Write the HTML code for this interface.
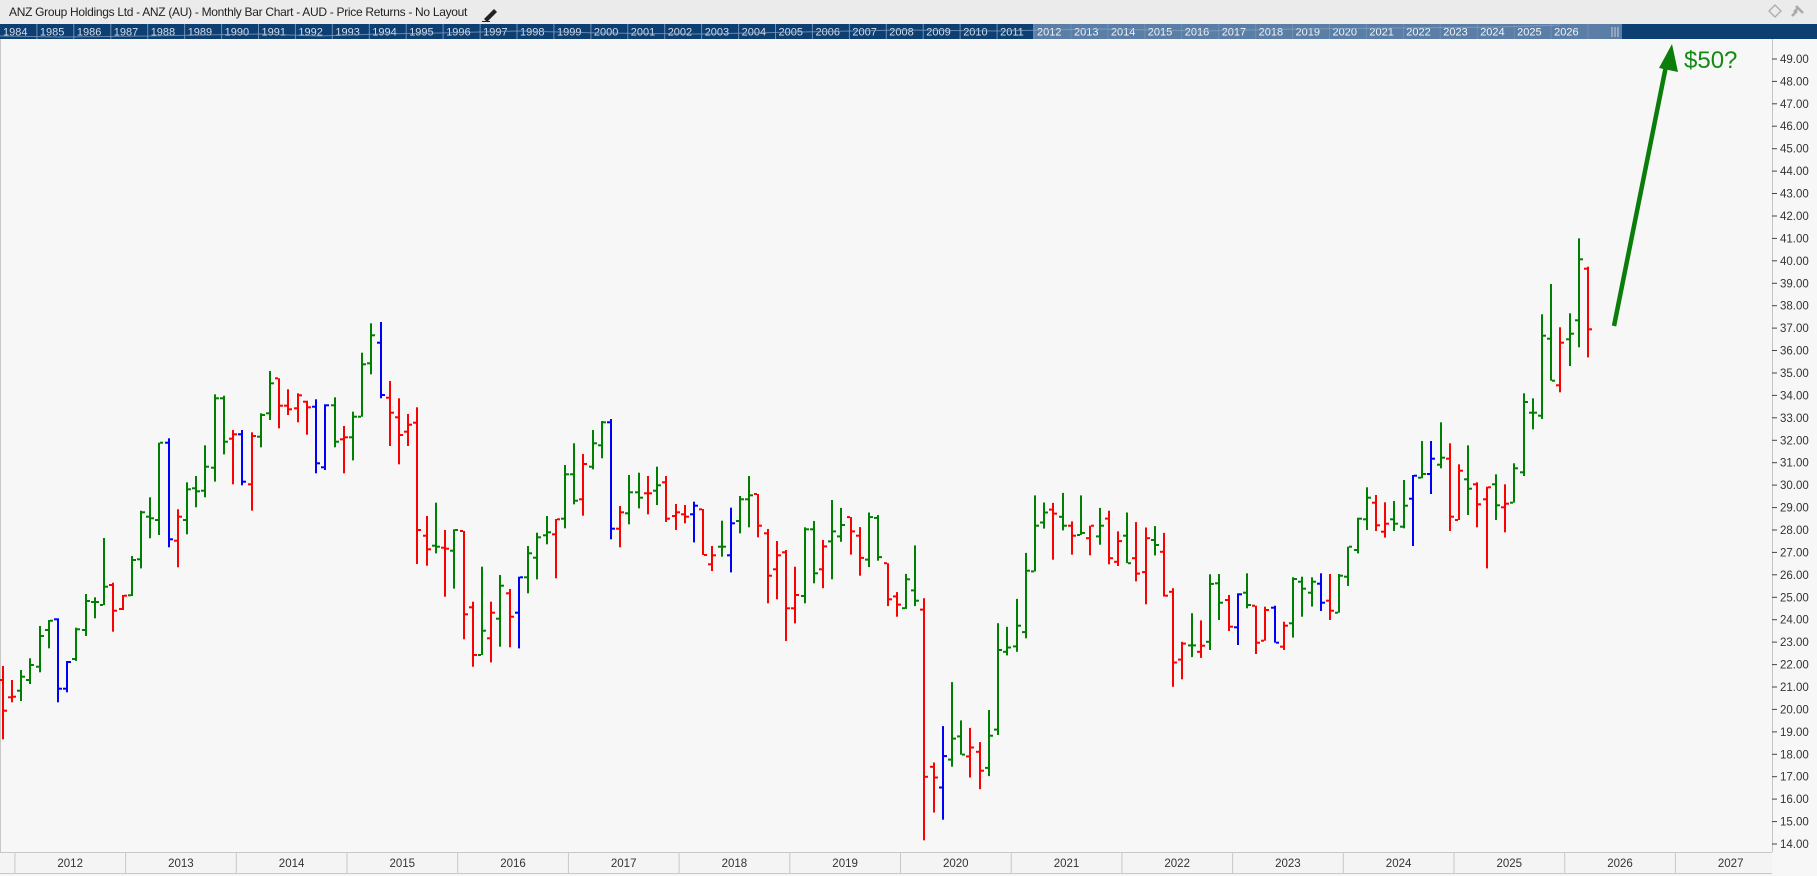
<!DOCTYPE html>
<html><head><meta charset="utf-8">
<style>
html,body{margin:0;padding:0;width:1817px;height:876px;overflow:hidden;background:#f7f7f7;font-family:"Liberation Sans",sans-serif}
#t{position:absolute;left:0;top:0;width:1817px;height:24px;background:#ebebeb;font-size:12px;color:#222;line-height:24px}
#t span{position:absolute;left:9px;top:0;letter-spacing:-0.3px}
svg{position:absolute;left:0;top:0}
</style></head><body>
<div id="t"><span>ANZ Group Holdings Ltd - ANZ (AU) - Monthly Bar Chart - AUD - Price Returns - No Layout</span></div>
<svg id="s" width="1817" height="876" xmlns="http://www.w3.org/2000/svg"></svg>
<script>
var S=document.getElementById('s'),h='';
h+='<path d="M484 19 L494 9 L497 12 L487 22 Z" fill="#222"/><line x1="482" y1="21.5" x2="490" y2="21.5" stroke="#222" stroke-width="1"/>';
h+='<path d="M1775 5 L1781 11 L1775 17 L1769 11 Z" fill="none" stroke="#aaa" stroke-width="1.3"/>';
h+='<path d="M1792 16 L1797 11 M1796 6 L1803 13 M1798 8 L1794 12" stroke="#aaa" stroke-width="2.5" fill="none"/>';
h+='<rect x="0" y="24" width="1817" height="15" fill="#0d3f73"/>';
h+='<rect x="1033" y="24" width="589" height="15" fill="#5a7ea6"/>';
for(var k=0;k<43;k++){var x=k*36.93;var yr=1984+k;
 h+='<line x1="'+(x+36.9).toFixed(1)+'" y1="24" x2="'+(x+36.9).toFixed(1)+'" y2="39" stroke="#6f8fb5" stroke-width="1"/>';
 h+='<text x="'+(x+3).toFixed(1)+'" y="35.5" font-size="11" fill="'+(yr>=2012?'#f2f5f9':'#d5dde8')+'">'+yr+'</text>';}
h+='<polyline points="0,36 60,37 150,36 200,35 260,34 320,36 380,34 440,33 520,31 600,33 700,34 800,32 900,30 1000,31 1100,29 1200,31 1300,29 1400,28 1500,27 1560,25" fill="none" stroke="#8aa6c6" stroke-width="1" opacity="0.7"/>';
h+='<line x1="1612" y1="27" x2="1612" y2="37" stroke="#ccd" /><line x1="1615" y1="27" x2="1615" y2="37" stroke="#ccd"/><line x1="1618" y1="27" x2="1618" y2="37" stroke="#ccd"/>';
h+='<line x1="0.5" y1="39" x2="0.5" y2="852" stroke="#c8c8c8"/>';
h+='<line x1="1772.5" y1="39" x2="1772.5" y2="852" stroke="#c4c4c4"/>';
function py(p){return 844-(p-14)*22.43;}
for(var p=14;p<=50;p++){var y=py(p);if(y<38)continue;
 h+='<line x1="1772" y1="'+y.toFixed(1)+'" x2="1777" y2="'+y.toFixed(1)+'" stroke="#444"/>';
 h+='<text x="1780" y="'+(y+4).toFixed(1)+'" font-size="11.5" fill="#333">'+p.toFixed(2)+'</text>';}
h+='<rect x="0" y="852" width="1772" height="22" fill="#f4f4f4"/>';
h+='<line x1="0" y1="852.5" x2="1772" y2="852.5" stroke="#c8c8c8"/><line x1="0" y1="873.5" x2="1772" y2="873.5" stroke="#c8c8c8"/>';
for(var yr=2011;yr<=2027;yr++){var s0=1454-(2025-yr)*110.7;
 h+='<line x1="'+s0.toFixed(1)+'" y1="852" x2="'+s0.toFixed(1)+'" y2="874" stroke="#c8c8c8"/>';
 var c=s0+55.3;h+='<text x="'+c.toFixed(1)+'" y="867" font-size="11.5" fill="#333" text-anchor="middle">'+yr+'</text>';}
var G=[
[300,3,[[8,1098,1318,1140,1232,'r'],[36,1140,1207,1192,1190,'r'],[66,1110,1203,1172,1130,'g'],[93,1075,1152,1140,1095,'g'],[120,978,1117,1100,1008,'g'],[147,960,1045,990,962,'g'],[174,955,1207,958,1166,'b'],[204,1083,1177,1166,1086,'b'],[231,983,1083,1077,988,'g'],[258,882,1008,990,903,'g'],[285,892,955,906,906,'g'],[315,714,915,915,860,'g'],[342,848,995,855,932,'r'],[369,885,930,927,887,'r'],[396,768,888,886,780,'g'],[423,632,805,778,637,'g'],[453,592,715,650,655,'g'],[480,428,705,660,428,'g'],[507,415,742,428,718,'b'],[534,628,802,722,650,'r'],[561,547,703,660,568,'g'],[590,528,622,565,574,'g'],[617,436,592,572,500,'g'],[644,283,545,503,295,'g'],[671,287,463,295,425,'g'],[702,390,553,416,403,'r'],[729,390,556,403,545,'b'],[756,397,632,553,408,'r'],[783,340,442,410,345,'g'],[810,213,360,340,250,'g'],[840,235,385,235,317,'r'],[867,268,345,317,328,'r'],[894,280,367,325,286,'r'],[921,302,404,305,322,'r'],[951,298,520,320,490,'b'],[978,313,510,502,316,'b'],[1005,292,442,316,425,'g'],[1032,378,520,418,412,'r'],[1059,335,481,412,350,'g'],[1089,158,350,350,193,'g'],[1116,70,223,190,106,'g'],[1143,66,295,128,285,'b'],[1170,243,438,293,338,'r'],[1197,295,493,352,405,'r'],[1227,342,438,395,374,'r'],[1254,322,792,368,690,'r']]],
[300,3,[[81,648,797,707,748,'r'],[108,608,760,737,740,'g'],[138,690,890,743,746,'r'],[165,688,866,752,690,'g'],[192,693,1018,693,943,'r'],[219,905,1100,922,1065,'r'],[246,800,1065,1065,992,'g'],[276,905,1087,1015,938,'r'],[303,825,1040,956,857,'g'],[330,867,1042,880,950,'r'],[357,830,1045,938,832,'b'],[384,738,880,832,760,'g'],[414,698,838,773,712,'g'],[441,648,733,706,697,'g'],[468,657,835,703,658,'r'],[495,495,685,656,523,'g'],[525,430,613,523,602,'g'],[552,462,647,598,492,'r'],[579,390,508,500,430,'g'],[606,363,475,436,367,'g'],[633,357,718,367,686,'b'],[663,618,742,686,637,'r'],[690,525,673,640,577,'g'],[717,518,625,577,593,'g'],[744,528,643,580,580,'r'],[771,500,615,572,556,'g'],[801,528,666,547,656,'r'],[828,612,690,648,637,'r'],[855,615,670,643,650,'r'],[882,605,727,643,617,'b'],[909,627,765,628,765,'r'],[939,738,813,793,766,'r'],[966,662,770,740,740,'g'],[993,623,817,766,670,'b'],[1020,588,700,663,598,'g'],[1050,528,682,598,586,'g'],[1077,582,712,582,677,'r'],[1104,687,910,700,827,'r'],[1131,723,898,808,766,'r'],[1158,750,1023,757,925,'r'],[1188,800,970,925,885,'r'],[1215,682,910,888,688,'g'],[1242,663,850,688,820,'g']]],
[300,2.8,[[69,672,807,754,690,'r'],[99,560,782,676,648,'g'],[126,582,677,662,630,'g'],[153,608,713,608,648,'r'],[180,636,772,660,722,'r'],[207,595,748,727,608,'g'],[234,602,730,610,720,'g'],[261,737,857,737,838,'r'],[291,818,887,830,853,'r'],[318,767,865,863,782,'g'],[345,687,857,813,842,'g'],[375,835,1513,867,1335,'r'],[402,1295,1435,1307,1337,'r'],[429,1193,1455,1365,1277,'b'],[456,1070,1307,1287,1228,'g'],[486,1177,1273,1222,1273,'g'],[513,1198,1337,1278,1253,'r'],[540,1238,1370,1265,1318,'r'],[567,1148,1333,1310,1220,'g'],[594,905,1218,1203,980,'g'],[624,915,995,985,973,'g'],[651,837,985,970,912,'g'],[678,708,947,930,758,'g'],[705,547,760,760,632,'g'],[732,567,640,623,595,'g'],[762,568,727,587,598,'r'],[789,540,645,607,632,'g'],[816,620,713,632,660,'r'],[843,547,658,658,652,'g'],[873,632,715,667,632,'r'],[900,582,685,662,632,'g'],[927,590,740,612,723,'r'],[954,648,745,733,675,'r'],[981,595,737,660,737,'g'],[1011,622,788,723,766,'r'],[1038,637,852,762,667,'r'],[1065,633,715,672,686,'g'],[1092,652,830,705,828,'r'],[1122,807,1083,817,1015,'r'],[1149,957,1062,1007,962,'r'],[1176,877,1000,967,967,'g'],[1203,897,1002,985,968,'r'],[1230,768,980,957,795,'g']]],
[220,3,[[57,1062,1200,1090,1148,'g'],[87,1125,1233,1140,1220,'r'],[114,1120,1275,1222,1123,'b'],[141,1060,1165,1118,1155,'g'],[168,1157,1302,1157,1268,'r'],[198,1160,1262,1262,1170,'r'],[225,1157,1268,1163,1268,'b'],[252,1205,1290,1280,1217,'r'],[279,1072,1253,1210,1077,'g'],[309,1070,1190,1085,1106,'g'],[336,1072,1160,1118,1085,'g'],[363,1060,1173,1091,1148,'b'],[390,1062,1200,1142,1172,'r'],[417,1062,1178,1178,1067,'g'],[447,980,1098,1070,980,'g'],[474,893,1000,990,896,'g'],[501,802,930,898,833,'g'],[528,825,933,848,916,'r'],[555,847,953,935,911,'r'],[585,843,933,898,911,'g'],[612,780,925,920,857,'g'],[639,765,978,836,767,'b'],[666,663,775,773,762,'g'],[696,663,822,762,716,'b'],[723,607,745,734,713,'g'],[750,670,933,716,890,'r'],[777,733,900,900,752,'r'],[804,676,885,778,806,'g'],[834,787,922,793,853,'r'],[861,800,1045,838,802,'r'],[888,763,900,793,856,'g'],[915,793,937,862,851,'r'],[942,730,848,848,745,'g'],[969,520,768,757,546,'g'],[999,535,628,578,578,'g'],[1026,283,597,587,347,'g'],[1053,192,482,356,482,'g'],[1083,322,517,496,368,'r'],[1110,280,438,358,341,'g'],[1137,55,382,301,118,'g'],[1164,140,412,146,328,'r']]]
];
var col={r:'#ff0000',g:'#008000',b:'#0000ff'};var i=0;
G.forEach(function(g){var oy=g[0],s=g[1];g[2].forEach(function(b){
 var x=Math.round(2.7+i*9.217);i++;var c=col[b[5]];
 var t=oy+b[1]/s,bt=oy+b[2]/s,o=oy+b[3]/s,cl=oy+b[4]/s;
 h+='<rect x="'+(x-1)+'" y="'+t.toFixed(1)+'" width="2" height="'+(bt-t).toFixed(1)+'" fill="'+c+'"/>';
 h+='<rect x="'+(x-4)+'" y="'+(o-1).toFixed(1)+'" width="3" height="2" fill="'+c+'"/>';
 h+='<rect x="'+(x+1)+'" y="'+(cl-1).toFixed(1)+'" width="3" height="2" fill="'+c+'"/>';
});});
h+='<line x1="1614" y1="326" x2="1666" y2="66" stroke="#0a7d0a" stroke-width="4.5"/>';
h+='<path d="M1672 44 L1678 72 L1659 68 Z" fill="#0a7d0a"/>';
h+='<text x="1684" y="68" font-size="24" fill="#138a13">$50?</text>';
S.innerHTML=h;
</script>
</body></html>
